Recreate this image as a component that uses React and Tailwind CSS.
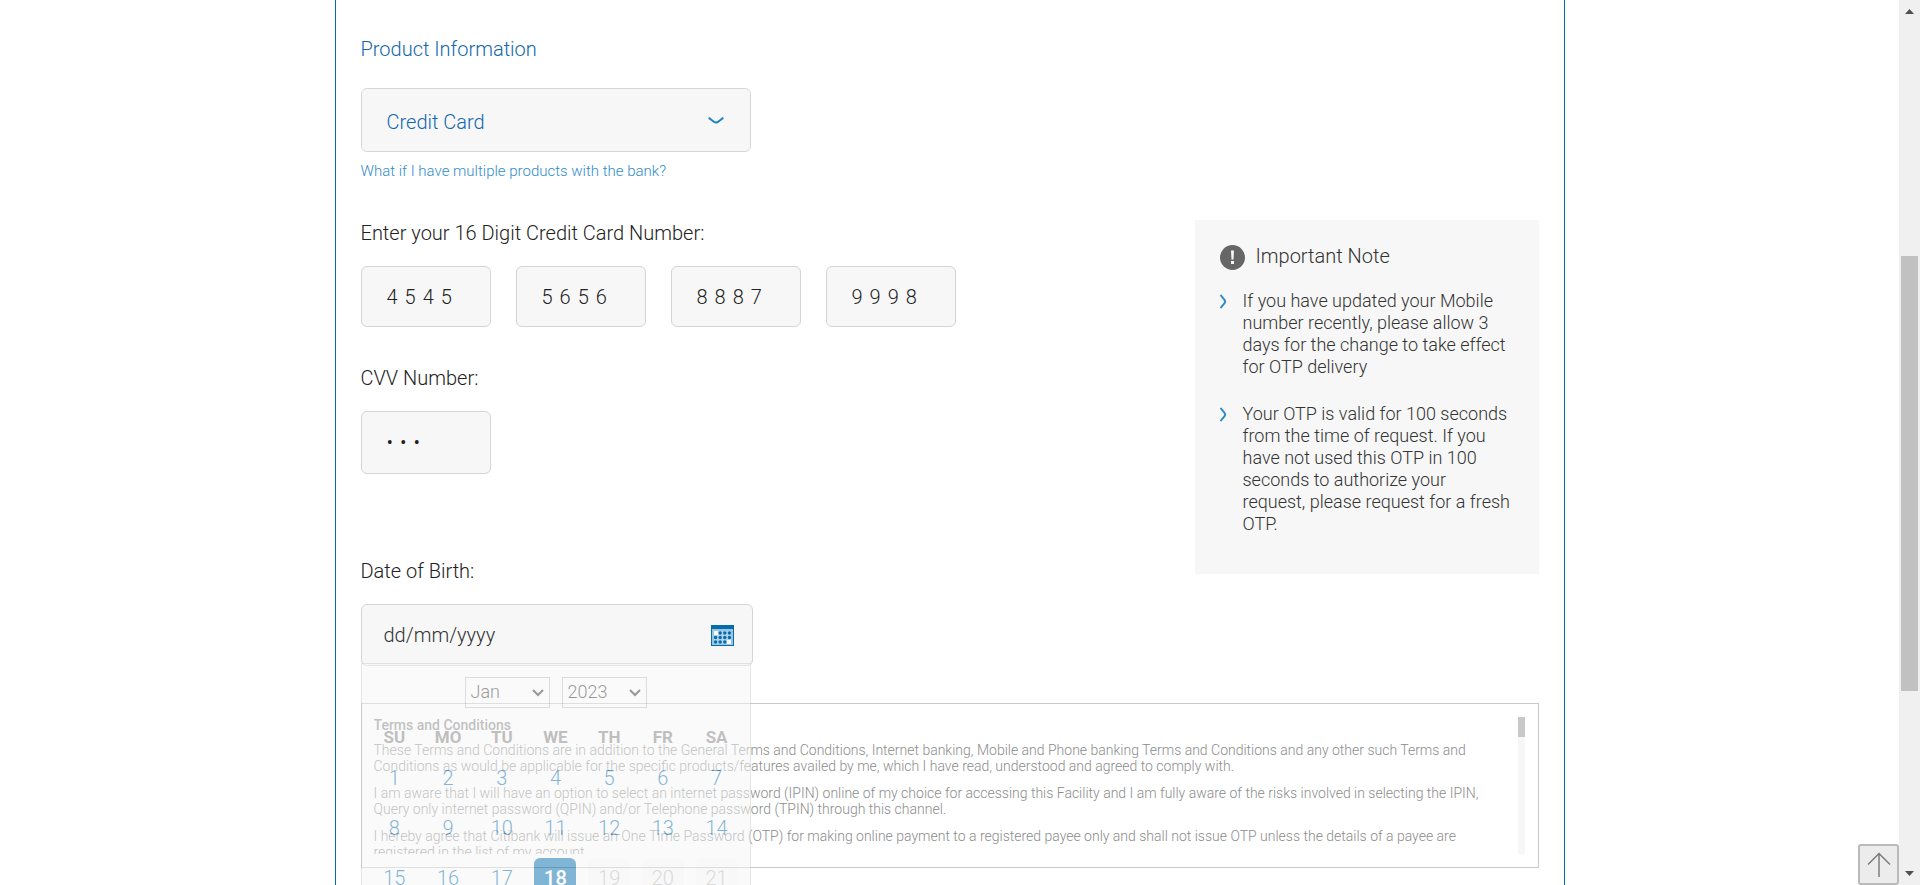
import React from "react";

const cardParts = ["4545", "5656", "8887", "9998"];
const weekDays = ["SU", "MO", "TU", "WE", "TH", "FR", "SA"];
const weeks = [
  [1, 2, 3, 4, 5, 6, 7],
  [8, 9, 10, 11, 12, 13, 14],
  [15, 16, 17, 18, 19, 20, 21],
  [22, 23, 24, 25, 26, 27, 28],
];
const today = 18;

const notes = [
  "If you have updated your Mobile number recently, please allow 3 days for the change to take effect for OTP delivery",
  "Your OTP is valid for 100 seconds from the time of request. If you have not used this OTP in 100 seconds to authorize your request, please request for a fresh OTP.",
];

const terms = [
  "These Terms and Conditions are in addition to the General Terms and Conditions, Internet banking, Mobile and Phone banking Terms and Conditions and any other such Terms and Conditions as would be applicable for the specific products/features availed by me, which I have read, understood and agreed to comply with.",
  "I am aware that I will have an option to select an internet password (IPIN) online of my choice for accessing this Facility and I am fully aware of the risks involved in selecting the IPIN, Query only internet password (QPIN) and/or Telephone password (TPIN) through this channel.",
  "I hereby agree that Citibank will issue an One Time Password (OTP) for making online payment to a registered payee only and shall not issue OTP unless the details of a payee are registered in the list of my account",
];

const field = "rounded-md border border-[#d5d5d5] bg-[#f7f7f7] font-light text-[#222] outline-none";
const label = "block text-[20px] leading-[26px] text-[#222]";

function CalendarIcon() {
  return (
    <svg width="23" height="21" viewBox="0 0 23 21" aria-hidden="true">
      <rect width="23" height="21" fill="#056dae" />
      <rect x="1" y="4" width="21" height="16" fill="#9cc5df" />
      <rect x="3" y="6" width="17" height="13" fill="#b4d3e7" />
      <rect x="3" y="6" width="4" height="4" fill="#f7f7f7" />
      <rect x="16" y="15" width="4" height="4" fill="#f7f7f7" />
      <g fill="#056dae">
        <circle cx="9.2" cy="8" r="1.7" />
        <circle cx="13.8" cy="8" r="1.7" />
        <circle cx="18.4" cy="8" r="1.7" />
        <circle cx="4.6" cy="12.5" r="1.7" />
        <circle cx="9.2" cy="12.5" r="1.7" />
        <circle cx="13.8" cy="12.5" r="1.7" />
        <circle cx="18.4" cy="12.5" r="1.7" />
        <circle cx="4.6" cy="17" r="1.7" />
        <circle cx="9.2" cy="17" r="1.7" />
        <circle cx="13.8" cy="17" r="1.7" />
      </g>
    </svg>
  );
}

function CalendarSelect({ name, value }) {
  return (
    <div className="relative">
      <select
        aria-label={name}
        defaultValue={value}
        className="h-[31px] w-[85px] appearance-none border border-[#bbb] bg-transparent pb-[2px] pl-[5px] text-[18px] font-light text-[#333]"
      >
        <option>{value}</option>
      </select>
      <svg className="pointer-events-none absolute top-3 right-[6px]" width="12" height="8" viewBox="0 0 12 8" fill="none" stroke="#333" strokeWidth="2" aria-hidden="true">
        <path d="M1 1l5 5 5-5" />
      </svg>
    </div>
  );
}

function DatePopup() {
  return (
    <div className="absolute top-[59px] left-0 w-[390px] border border-[#cfcfcf] bg-[#f7f7f7] px-[6px] pt-[13px] opacity-50">
      <div className="flex justify-center gap-3">
        <CalendarSelect name="Month" value="Jan" />
        <CalendarSelect name="Year" value="2023" />
      </div>
      <table className="mt-3 w-full table-fixed border-collapse">
        <thead>
          <tr>
            {weekDays.map((d) => (
              <th key={d} className="h-[33px] p-0 text-[17px] leading-[24px] font-bold text-[#808080]">{d}</th>
            ))}
          </tr>
        </thead>
        <tbody>
          {weeks.map((week) => (
            <tr key={week[0]}>
              {week.map((day) => (
                <td key={day} className="h-[50px] p-0 text-center">
                  <button
                    type="button"
                    disabled={day > today}
                    className={
                      "h-10 w-[42px] rounded-md text-[20px] leading-[26px] " +
                      (day === today
                        ? "bg-[#056dae] font-medium text-white"
                        : day > today
                          ? "bg-[#f3f3f3] font-light text-[#b5b5b5]"
                          : "font-light text-[#056dae]")
                    }
                  >
                    {day}
                  </button>
                </td>
              ))}
            </tr>
          ))}
        </tbody>
      </table>
    </div>
  );
}

function ImportantNote() {
  return (
    <aside className="w-[344px] shrink-0 bg-[#f7f7f7] pt-[25px] pr-[27px] pb-[39px] pl-[25px]">
      <div className="flex gap-[11px]">
        <svg width="25" height="25" viewBox="0 0 25 25" aria-hidden="true">
          <circle cx="12.5" cy="12.5" r="12.5" fill="#666" />
          <path d="M11 5.5h3l-.5 9h-2zM11 16h3v3h-3z" fill="#f7f7f7" />
        </svg>
        <h2 className="text-[20px] leading-[22px] text-[#333]">Important Note</h2>
      </div>
      <ul className="mt-5 flex flex-col gap-[25px]">
        {notes.map((note) => (
          <li key={note} className="flex gap-[15px]">
            <svg className="mt-1 shrink-0" width="8" height="15" viewBox="0 0 8 15" fill="none" stroke="#2e8bc5" strokeWidth="2" aria-hidden="true">
              <path d="M0.6 0.8C1.5 2.8 5.2 5.6 5.2 7.5S1.5 12.2 0.6 14.2" />
            </svg>
            <p className="text-[18px] leading-[22px] text-[#333]">{note}</p>
          </li>
        ))}
      </ul>
    </aside>
  );
}

function Terms() {
  return (
    <section className="mt-[37px] flex justify-between border border-[#c8c8c8] py-[13px] pr-[13px] pl-3">
      <div className="h-[137px] w-[1120px] overflow-hidden text-[14px] leading-[16px] text-[#8c8c8c]">
        <h3 className="pb-[9px] font-medium">Terms and Conditions</h3>
        {terms.map((t) => (
          <p key={t} className="pb-[11px]">{t}</p>
        ))}
      </div>
      <div className="w-[7px] bg-[#f7f7f7]">
        <div className="h-5 bg-[#c8c8c8]" />
      </div>
    </section>
  );
}

function PageScrollbar() {
  return (
    <div className="relative flex w-[21px] shrink-0 flex-col items-center justify-between bg-[#f0f0f0] pt-[9px] pb-[9px]">
      <svg width="9" height="5" viewBox="0 0 9 5" aria-hidden="true"><path d="M4.5 0L9 5H0z" fill="#505050" /></svg>
      <div className="absolute top-[256px] h-[435px] w-[17px] bg-[#c1c1c1]" />
      <svg width="9" height="5" viewBox="0 0 9 5" aria-hidden="true"><path d="M0 0h9L4.5 5z" fill="#505050" /></svg>
    </div>
  );
}

export default function App() {
  return (
    <div className="flex h-screen overflow-hidden bg-white font-['Roboto','Open_Sans',sans-serif] font-light">
      <div className="relative flex flex-1 justify-center overflow-hidden">
        <main className="w-[1230px] border-x border-[#056dae] px-[25px] pt-[37px]">
          <h1 className="text-[20px] leading-[24px] text-[#1167ab]">Product Information</h1>
          <div className="relative mt-[27px] w-[390px]">
            <select
              aria-label="Product"
              defaultValue="Credit Card"
              className="h-16 w-full appearance-none rounded-md border border-[#d5d5d5] bg-[#f7f7f7] pt-1 pl-[25px] text-[20px] font-light text-[#1167ab] outline-none"
            >
              <option>Credit Card</option>
            </select>
            <svg className="pointer-events-none absolute top-[29px] right-[27px]" width="16" height="8" viewBox="0 0 16 8" fill="none" stroke="#2585c3" strokeWidth="2" aria-hidden="true">
              <path d="M0.6 0.8C2.8 1.8 5.8 5.6 8 5.6s5.2-3.8 7.4-4.8" />
            </svg>
          </div>
          <a href="#products" className="mt-[9px] block w-fit text-[15px] leading-[20px] text-[#2f8ccb]">
            What if I have multiple products with the bank?
          </a>

          <div className="mt-[39px] flex items-start justify-between">
            <form className="flex flex-col">
              <label htmlFor="card-1" className={label}>Enter your 16 Digit Credit Card Number:</label>
              <div className="mt-5 flex gap-[25px]">
                {cardParts.map((part, i) => (
                  <input
                    key={part}
                    id={"card-" + (i + 1)}
                    aria-label={"Card number part " + (i + 1)}
                    defaultValue={part}
                    className={field + " h-[61px] w-[130px] pl-[25px] text-[20px] tracking-[7px]"}
                  />
                ))}
              </div>

              <label htmlFor="cvv" className={label + " mt-[38px]"}>CVV Number:</label>
              <input
                id="cvv"
                type="password"
                autoComplete="off"
                defaultValue="123"
                className={field + " mt-5 h-[63px] w-[130px] pb-[2px] pl-[25px] text-[20px] tracking-[7px]"}
              />

              <label htmlFor="dob" className={label + " mt-[84px]"}>Date of Birth:</label>
              <div className="relative mt-5 w-[392px]">
                <input
                  id="dob"
                  placeholder="dd/mm/yyyy"
                  className={field + " block h-[62px] w-full pl-[22px] text-[20px] placeholder:text-[#333]"}
                />
                <button type="button" aria-label="Open calendar" className="absolute top-[21px] right-[19px]">
                  <CalendarIcon />
                </button>
                <DatePopup />
              </div>
            </form>
            <ImportantNote />
          </div>

          <Terms />
        </main>

        <button
          type="button"
          aria-label="Back to top"
          className="absolute right-0 bottom-0 flex size-[41px] items-center justify-center rounded-[3px] border-2 border-[#bababa] bg-[#ececec]"
        >
          <svg width="24" height="26" viewBox="0 0 24 26" fill="none" stroke="#777" strokeWidth="1.4" aria-hidden="true">
            <path d="M12 25V1.5M1 12.5L12 1.5l11 11" />
          </svg>
        </button>
      </div>
      <PageScrollbar />
    </div>
  );
}
